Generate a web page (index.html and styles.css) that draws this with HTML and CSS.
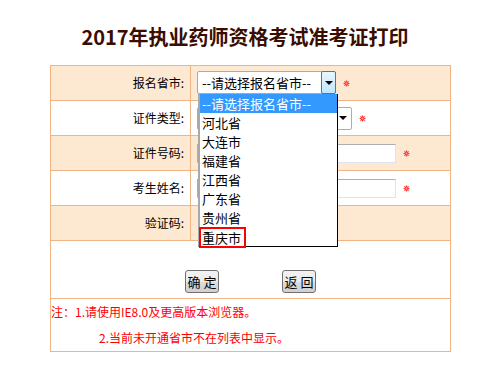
FILE: index.html
```html
<!DOCTYPE html>
<html lang="zh-CN">
<head>
  <meta charset="UTF-8" />
  <meta name="viewport" content="width=device-width, initial-scale=1.0" />
  <title>2017年执业药师资格考试准考证打印</title>
  <link rel="stylesheet" href="styles.css">
</head>
<body>
  <h1 class="title">2017年执业药师资格考试准考证打印</h1>

  <div class="form-box">
    <div class="row odd">
      <div class="label">报名省市:</div>
      <div class="field">
        <div class="select-wrap">
          <div class="select focus">
            <span class="select-text">--请选择报名省市--</span>
            <span class="arrow-box"><span class="tri"></span></span>
          </div>
          <ul class="dropdown">
            <li class="active">--请选择报名省市--</li>
            <li>河北省</li>
            <li>大连市</li>
            <li>福建省</li>
            <li>江西省</li>
            <li>广东省</li>
            <li>贵州省</li>
            <li><span class="mark">重庆市</span></li>
          </ul>
        </div>
        <svg class="req" width="7" height="7" viewBox="0 0 7 7"><path d="M3.5 0.5V6.5M0.5 3.5H6.5M1.4 1.4L5.6 5.6M5.6 1.4L1.4 5.6" stroke="#f33" stroke-width="1.2"/><circle cx="3.5" cy="3.5" r="1" fill="#f9a"/></svg>
      </div>
    </div>

    <div class="row">
      <div class="label">证件类型:</div>
      <div class="field">
        <div class="select plain"><span class="select-text"></span><span class="tri"></span></div>
        <svg class="req" width="7" height="7" viewBox="0 0 7 7"><path d="M3.5 0.5V6.5M0.5 3.5H6.5M1.4 1.4L5.6 5.6M5.6 1.4L1.4 5.6" stroke="#f33" stroke-width="1.2"/><circle cx="3.5" cy="3.5" r="1" fill="#f9a"/></svg>
      </div>
    </div>

    <div class="row odd">
      <div class="label">证件号码:</div>
      <div class="field">
        <input class="text-input" type="text">
        <svg class="req" width="7" height="7" viewBox="0 0 7 7"><path d="M3.5 0.5V6.5M0.5 3.5H6.5M1.4 1.4L5.6 5.6M5.6 1.4L1.4 5.6" stroke="#f33" stroke-width="1.2"/><circle cx="3.5" cy="3.5" r="1" fill="#f9a"/></svg>
      </div>
    </div>

    <div class="row">
      <div class="label">考生姓名:</div>
      <div class="field">
        <input class="text-input" type="text">
        <svg class="req" width="7" height="7" viewBox="0 0 7 7"><path d="M3.5 0.5V6.5M0.5 3.5H6.5M1.4 1.4L5.6 5.6M5.6 1.4L1.4 5.6" stroke="#f33" stroke-width="1.2"/><circle cx="3.5" cy="3.5" r="1" fill="#f9a"/></svg>
      </div>
    </div>

    <div class="row odd">
      <div class="label">验证码:</div>
      <div class="field"></div>
    </div>

    <div class="row buttons">
      <button type="button" class="btn">确 定</button>
      <button type="button" class="btn">返 回</button>
    </div>

    <div class="row notes">
      <p>注：1.请使用IE8.0及更高版本浏览器。</p>
      <p class="indent">2.当前未开通省市不在列表中显示。</p>
    </div>
  </div>
</body>
</html>
```

FILE: styles.css
```css
* {
  margin: 0;
  padding: 0;
  box-sizing: border-box;
  font-family: 'Noto Sans CJK SC', 'Liberation Sans', sans-serif;
}

body {
  background: #fff;
  color: #000;
}

.title {
  margin: 25px 0 16px;
  font-size: 20px;
  line-height: 24px;
  font-weight: 700;
  text-align: center;
  color: #3a0d00;
}

.form-box {
  margin-left: 50px;
  width: 401px;
  border: 1px solid #f1b585;
}

.row {
  display: flex;
  height: 35px;
  border-top: 1px solid #f1b585;
}

.row:first-child {
  height: 34px;
  border-top: none;
}

.row.odd {
  background: #fde9d1;
}

.label {
  width: 140px;
  border-right: 1px solid #f1b585;
  padding-right: 6px;
  font-size: 12px;
  line-height: 34px;
  text-align: right;
}

.field {
  flex: 1;
  display: flex;
  align-items: center;
  padding-left: 6px;
}

.select-wrap {
  position: relative;
}

.select {
  display: flex;
  align-items: center;
  height: 23px;
  background: #fff;
  font-size: 13px;
}

.select.focus {
  width: 139px;
  border: 1px solid #7eb4ea;
  border-radius: 2px;
  margin-top: -1px;
}

.select-text {
  flex: 1;
  padding-left: 4px;
  line-height: 21px;
  white-space: nowrap;
}

.arrow-box {
  display: flex;
  align-items: center;
  justify-content: center;
  width: 15px;
  height: 23px;
  margin: -1px -1px -1px 0;
  border: 1px solid #3c7fb1;
  border-radius: 2px;
  background: linear-gradient(#eaf6fd, #bee6fd);
}

.tri {
  width: 0;
  height: 0;
  border-left: 4px solid transparent;
  border-right: 4px solid transparent;
  border-top: 4px solid #000;
}

.select.plain {
  width: 155px;
  border: 1px solid #abadb3;
  border-radius: 2px;
  padding-right: 4px;
}

.req {
  margin-left: 7px;
}

.text-input {
  width: 199px;
  height: 19px;
  border: 1px solid #e2e3ea;
  border-top-color: #abadb3;
  border-left-color: #abadb3;
  background: #fff;
  outline: none;
}

.dropdown {
  position: absolute;
  left: 1px;
  top: 22px;
  z-index: 5;
  width: 140px;
  list-style: none;
  background: #fff;
  border: 1px solid #000;
  border-top: none;
  border-left: 2px solid #a9a9a9;
  font-size: 13px;
}

.dropdown li {
  height: 19px;
  line-height: 19px;
  padding-left: 2px;
  white-space: nowrap;
}

.dropdown li.active {
  background: #3399ff;
  color: #fff;
}

.mark {
  display: inline-block;
  vertical-align: top;
  position: relative;
  width: 47px;
  height: 21px;
  margin-left: -3px;
  padding-left: 1px;
  border: 2px solid #f00;
  line-height: 17px;
}

.row.buttons {
  height: 58px;
  justify-content: center;
  align-items: flex-end;
  gap: 63px;
  padding-bottom: 5px;
}

.btn {
  width: 34px;
  height: 23px;
  border: 1px solid #707070;
  border-radius: 3px;
  background: linear-gradient(#f2f2f2 0%, #ebebeb 50%, #dddddd 51%, #cfcfcf 100%);
  font-size: 13px;
  color: #000;
  white-space: nowrap;
}

.row.notes {
  display: block;
  height: 53px;
  font-size: 12px;
  line-height: 26px;
  color: #f00;
}

.notes .indent {
  padding-left: 48px;
}
```
